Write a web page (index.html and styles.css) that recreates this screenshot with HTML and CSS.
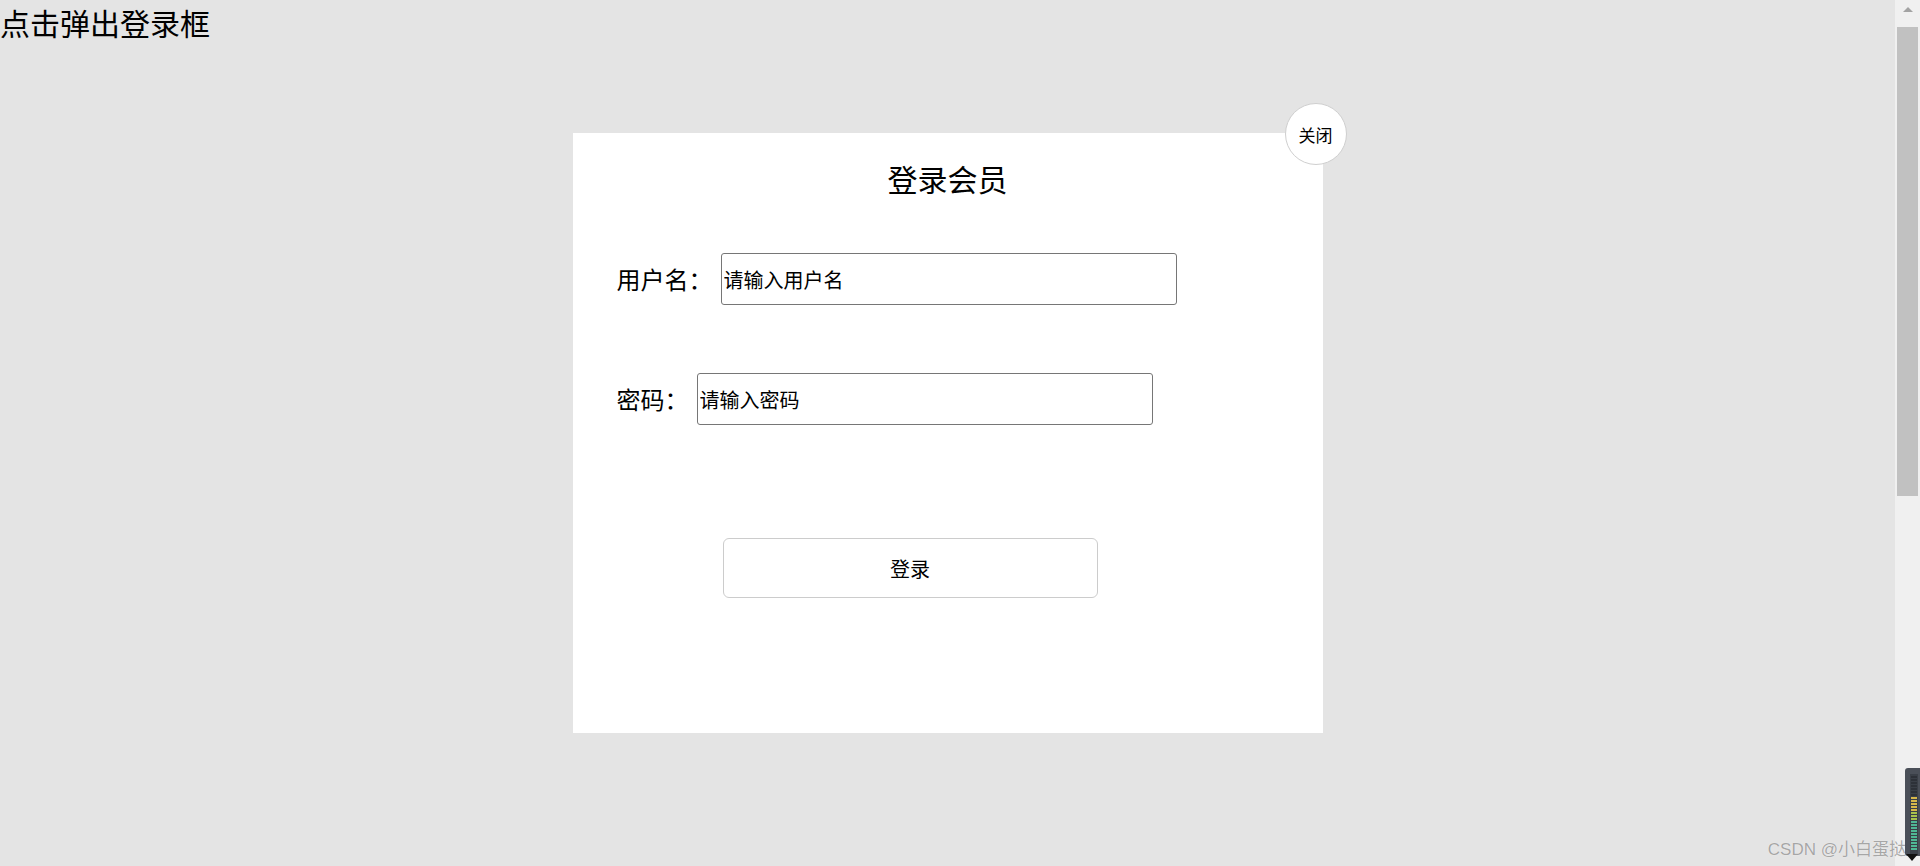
FILE: index.html
```html
<!DOCTYPE html>
<html lang="zh-CN">
<head>
<meta charset="utf-8">
<title>登录</title>
<link rel="stylesheet" href="styles.css">
</head>
<body>
<div class="screen">
  <main class="page">
    <div class="trigger">点击弹出登录框</div>
    <div class="overlay">
      <div class="modal">
        <button class="close" type="button">关闭</button>
        <h2 class="modal-title">登录会员</h2>
        <div class="field field-user">
          <label class="field-label">用户名：</label>
          <input class="field-input" type="text" value="请输入用户名">
        </div>
        <div class="field field-pass">
          <label class="field-label">密码：</label>
          <input class="field-input" type="text" value="请输入密码">
        </div>
        <button class="submit" type="button">登录</button>
      </div>
    </div>
  </main>
  <div class="scrollbar">
    <div class="scroll-up"></div>
    <div class="scroll-thumb"></div>
  </div>
</div>
<div class="watermark">CSDN @小白蛋挞</div>
<div class="meter">
  <svg width="15" height="94" viewBox="0 0 15 94">
    <path d="M3 0H15V88H3Q0 88 0 85V3Q0 0 3 0Z" fill="#4a4f58"/>
    <rect x="5" y="6" width="8" height="80" fill="#3a3f47"/>
    <g fill="#2d3138">
      <rect x="6" y="8" width="6" height="2"/><rect x="6" y="11" width="6" height="2"/>
      <rect x="6" y="14" width="6" height="2"/><rect x="6" y="17" width="6" height="2"/>
      <rect x="6" y="20" width="6" height="2"/><rect x="6" y="23" width="6" height="2"/>
      <rect x="6" y="26" width="6" height="2"/>
    </g>
    <g fill="#d7b84a">
      <rect x="6" y="29" width="6" height="2"/><rect x="6" y="32" width="6" height="2"/>
      <rect x="6" y="35" width="6" height="2"/><rect x="6" y="38" width="6" height="2"/>
      <rect x="6" y="41" width="6" height="2"/>
    </g>
    <g fill="#a8c24c">
      <rect x="6" y="44" width="6" height="2"/><rect x="6" y="47" width="6" height="2"/>
      <rect x="6" y="50" width="6" height="2"/>
    </g>
    <g fill="#4fb795">
      <rect x="6" y="53" width="6" height="2"/><rect x="6" y="56" width="6" height="2"/>
      <rect x="6" y="59" width="6" height="2"/><rect x="6" y="62" width="6" height="2"/>
      <rect x="6" y="65" width="6" height="2"/><rect x="6" y="68" width="6" height="2"/>
      <rect x="6" y="71" width="6" height="2"/><rect x="6" y="74" width="6" height="2"/>
      <rect x="6" y="77" width="6" height="2"/><rect x="6" y="80" width="6" height="2"/>
    </g>
    <path d="M1 86H13L7 93Z" fill="#111"/>
  </svg>
</div>
</body>
</html>
```
FILE: styles.css
```css
html, body {
  margin: 0;
  height: 100%;
  overflow: hidden;
}
body {
  font-family: "Noto Sans CJK SC", "Noto Sans", sans-serif;
  color: #000;
  position: relative;
}
.screen {
  display: flex;
  height: 100vh;
}
.page {
  flex: 1;
  position: relative;
  background: #e4e4e4;
}
.trigger {
  font-size: 30px;
  line-height: normal;
}
.overlay {
  position: absolute;
  inset: 0;
  display: flex;
  align-items: center;
  justify-content: center;
}
.modal {
  position: relative;
  width: 750px;
  height: 600px;
  background: #fff;
  padding-top: 25px;
  box-sizing: border-box;
}
.close {
  position: absolute;
  top: -30px;
  right: -24px;
  width: 62px;
  height: 62px;
  box-sizing: border-box;
  border: 1px solid #cfcfcf;
  border-radius: 50%;
  background: #fff;
  padding: 0;
  font-family: "Noto Sans CJK SC", sans-serif;
  font-size: 17px;
  color: #000;
  cursor: pointer;
}
.modal-title {
  margin: 0;
  font-size: 30px;
  font-weight: normal;
  line-height: 40px;
  text-align: center;
}
.field {
  display: flex;
  align-items: center;
  gap: 8px;
  margin-left: 44px;
  height: 52px;
}
.field-user {
  margin-top: 55px;
}
.field-pass {
  margin-top: 68px;
}
.field-label {
  font-size: 24px;
  line-height: 1;
}
.field-input {
  width: 456px;
  height: 52px;
  box-sizing: border-box;
  margin: 0;
  border: 1px solid #767676;
  border-radius: 3px;
  padding: 0 2px;
  font-family: "Noto Sans CJK SC", sans-serif;
  font-size: 20px;
  color: #000;
  background: #fff;
  outline: none;
}
.submit {
  display: block;
  margin: 113px 0 0 150px;
  width: 375px;
  height: 60px;
  box-sizing: border-box;
  border: 1px solid #cccccc;
  border-radius: 6px;
  background: #fff;
  padding: 0;
  font-family: "Noto Sans CJK SC", sans-serif;
  font-size: 20px;
  color: #000;
  cursor: pointer;
}
.scrollbar {
  width: 25px;
  background: #f0f0f0;
  display: flex;
  flex-direction: column;
  align-items: center;
}
.scroll-up {
  margin-top: 7px;
  width: 0;
  height: 0;
  border-left: 5px solid transparent;
  border-right: 5px solid transparent;
  border-bottom: 5px solid #a3a3a3;
}
.scroll-thumb {
  margin-top: 15px;
  width: 21px;
  height: 469px;
  background: #c1c1c1;
}
.watermark {
  position: absolute;
  right: 14px;
  bottom: 6px;
  font-family: "Liberation Sans", "Noto Sans CJK SC", sans-serif;
  font-size: 17px;
  line-height: 20px;
  color: #a6a6a6;
  text-shadow: 0 0 1px #fff;
}
.meter {
  position: absolute;
  right: 0;
  bottom: 4px;
  width: 15px;
  height: 94px;
}
.meter svg {
  display: block;
}
```
